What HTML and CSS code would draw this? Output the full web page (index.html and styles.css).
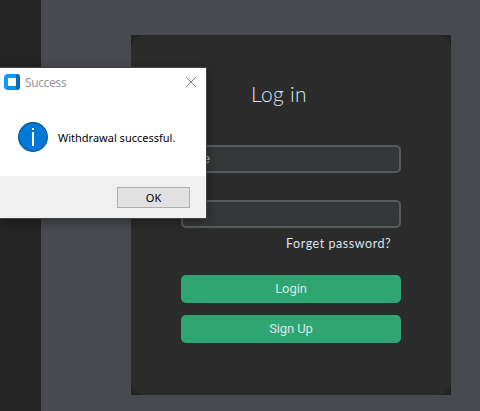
FILE: index.html
```html
<!DOCTYPE html>
<html lang="en">
<head>
<meta charset="utf-8">
<title>Log in</title>
<link rel="stylesheet" href="styles.css">
</head>
<body>
<div class="app">
  <aside class="sidebar"></aside>
  <main class="content">
    <div class="card-back">
      <form class="card">
        <h1 class="title">Log in</h1>
        <div class="field"><span class="field-text">e</span></div>
        <div class="field field-second"></div>
        <a class="forgot">Forget password?</a>
        <button class="action" type="button">Login</button>
        <button class="action" type="button">Sign Up</button>
      </form>
    </div>
  </main>
</div>
<section class="dialog" role="dialog">
  <header class="titlebar">
    <svg class="app-icon" width="16" height="16" viewBox="0 0 16 16">
      <rect width="16" height="16" rx="4" fill="#0a9bff"/>
      <path d="M12 1l1-1a3 3 0 0 1 3 3v10a3 3 0 0 1-3 3l-1-1z" fill="#0669b6"/>
      <path d="M4 12h8v4H4l-1-1z" fill="#0590f0"/>
      <rect x="4" y="4" width="8" height="8" rx="1" fill="#fff"/>
    </svg>
    <span class="dialog-title">Success</span>
    <svg class="close" width="12" height="12" viewBox="0 0 12 12">
      <path d="M1 1l10 10M11 1L1 11" stroke="#858585" stroke-width="1"/>
    </svg>
  </header>
  <div class="message">
    <svg class="info" width="30" height="30" viewBox="0 0 30 30">
      <circle cx="15" cy="15" r="14.4" fill="#0078d7" stroke="#075795" stroke-width="1.1"/>
      <path d="M14 6h2v2h-2zM14 10h2v14h-2z" fill="#fff"/>
    </svg>
    <span class="message-text">Withdrawal successful.</span>
  </div>
  <footer class="dialog-footer"><button class="ok" type="button">OK</button></footer>
</section>
</body>
</html>
```
FILE: styles.css
```css
* { box-sizing: border-box; }
body { margin: 0; overflow: hidden; background: #474a4e; }
.app { display: flex; width: 480px; height: 411px; }
.sidebar { width: 41px; background: #242424; }
.content { flex: 1; padding: 35px 29px 16px 90px; background: #474a4e; }
.card-back { width: 320px; height: 360px; background: #242424; }
.card {
  display: flex;
  flex-direction: column;
  height: 360px;
  padding: 45px 50px 0;
  border-radius: 15px;
  background: #2b2b2b;
}
.title {
  width: 60px;
  height: 28px;
  margin: 0 0 37px 70px;
  color: #dce4ee;
  font: 300 21px/28px Lato, sans-serif;
  letter-spacing: 0.3px;
  white-space: nowrap;
}
.field {
  height: 28px;
  padding-left: 20px;
  border: 2px solid #565b5e;
  border-radius: 5px;
  background: #343638;
  color: #bdbdbd;
}
.field-text {
  display: block;
  font: 13px/24px Roboto, sans-serif;
}
.field-second { margin-top: 27px; }
.forgot {
  height: 20px;
  margin: 6px 0 21px 105px;
  color: #dce4ee;
  font: 12.5px/20px Lato, sans-serif;
  letter-spacing: 0.55px;
  white-space: nowrap;
}
.action {
  height: 28px;
  margin: 0 0 12px;
  padding: 0;
  border: 0;
  border-radius: 5px;
  background: #2fa572;
  color: #dce4ee;
  font: 13px/28px Roboto, sans-serif;
  letter-spacing: -0.1px;
}
.dialog {
  position: absolute;
  left: 0;
  top: 68px;
  width: 206px;
  height: 150px;
  background: #fff;
  box-shadow: 0 0 0 1px #424244, 0 3px 10px rgba(0, 0, 0, .4);
  font-family: "Noto Sans", sans-serif;
}
.titlebar { display: flex; align-items: center; height: 29px; padding: 0 9px 0 4px; }
.app-icon { margin-top: -1px; }
.dialog-title { margin-left: 5px; color: #999; font-size: 12px; line-height: 18px; letter-spacing: -0.4px; }
.close { margin: -2px 0 0 auto; }
.message { display: flex; align-items: center; height: 79px; padding: 0 0 0 18px; }
.message-text {
  margin: 2px 0 0 10px;
  color: #000;
  font-size: 11px;
  white-space: nowrap;
}
.dialog-footer { height: 42px; padding: 11px 16px 0 117px; background: #f0f0f0; }
.ok {
  display: block;
  width: 73px;
  height: 21px;
  padding: 0;
  border: 1px solid #adadad;
  background: #e1e1e1;
  color: #000;
  font: 11px/19px "Noto Sans", sans-serif;
}
```
